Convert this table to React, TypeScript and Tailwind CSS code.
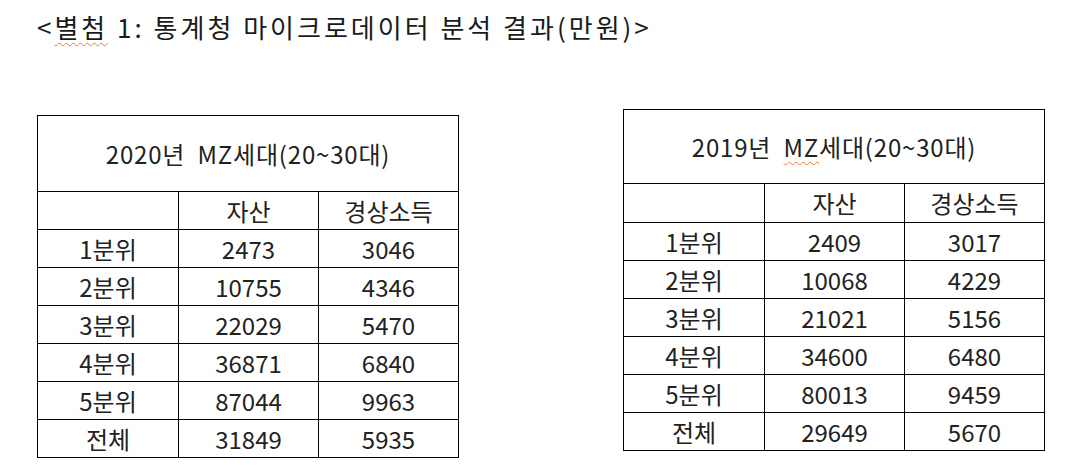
const left = {
  title: "2020년  MZ세대(20~30대)",
  spell: false,
  rows: [
    ["1분위", "2473", "3046"],
    ["2분위", "10755", "4346"],
    ["3분위", "22029", "5470"],
    ["4분위", "36871", "6840"],
    ["5분위", "87044", "9963"],
    ["전체", "31849", "5935"],
  ],
}

const right = {
  title: "2019년  MZ세대(20~30대)",
  spell: true,
  rows: [
    ["1분위", "2409", "3017"],
    ["2분위", "10068", "4229"],
    ["3분위", "21021", "5156"],
    ["4분위", "34600", "6480"],
    ["5분위", "80013", "9459"],
    ["전체", "29649", "5670"],
  ],
}

type Data = typeof left

function StatTable({ data, headH, colH }: { data: Data; headH: string; colH: string }) {
  const cell = "border border-black text-center p-0 align-middle"
  const [year, rest] = data.title.split("  ")
  return (
    <table className="border-collapse table-fixed text-[24px] leading-[28px] text-[#222] tracking-[0px]">
      <colgroup>
        <col className="w-[141px]" />
        <col className="w-[140px]" />
        <col className="w-[140px]" />
      </colgroup>
      <tbody>
        <tr className={headH}>
          <td colSpan={3} className={`${cell} tracking-[0.8px]`}>
            {year}&nbsp;&nbsp;
            {data.spell ? (
              <>
                <span className="underline decoration-wavy decoration-[#e08040] decoration-1 underline-offset-4">MZ</span>
                {rest.slice(2)}
              </>
            ) : (
              rest
            )}
          </td>
        </tr>
        <tr className={colH}>
          <td className={cell}></td>
          <td className={cell}>자산</td>
          <td className={cell}>경상소득</td>
        </tr>
        {data.rows.map((r) => (
          <tr key={r[0]} className="h-[38px]">
            {r.map((v, i) => (
              <td key={i} className={cell}>
                {v}
              </td>
            ))}
          </tr>
        ))}
      </tbody>
    </table>
  )
}

export default function App() {
  return (
    <div
      className="w-[1074px] h-[475px] bg-white pl-[37px] pt-[10px]"
      style={{ fontFamily: '"Noto Sans CJK KR", "Noto Sans", sans-serif' }}
    >
      <h1 className="text-[26px] leading-[34px] tracking-[3px] text-[#1a1a1a] font-normal">
        &lt;
        <span className="underline decoration-wavy decoration-[#e08040] decoration-1 underline-offset-4">별첨</span> 1: 통계청
        마이크로데이터 분석 결과(만원)&gt;
      </h1>
      <div className="flex items-start gap-[164px] mt-[65px]">
        <div className="mt-[6px]">
          <StatTable data={left} headH="h-[76px]" colH="h-[38px]" />
        </div>
        <StatTable data={right} headH="h-[74px]" colH="h-[39px]" />
      </div>
    </div>
  )
}
